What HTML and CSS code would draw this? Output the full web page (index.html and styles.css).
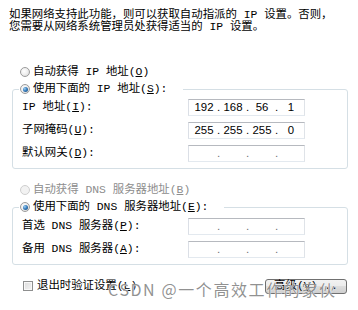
FILE: index.html
```html
<!DOCTYPE html>
<html>
<head>
<meta charset="utf-8">
<link rel="stylesheet" href="styles.css">
</head>
<body>
<div class="page">
  <p class="intro">如果网络支持此功能，则可以获取自动指派的 IP 设置。否则，<br>您需要从网络系统管理员处获得适当的 IP 设置。</p>

  <div class="option top"><span class="radio"></span><span>自动获得 IP 地址(<u>O</u>)</span></div>
  <fieldset class="group">
    <legend><span class="option"><span class="radio checked"></span><span>使用下面的 IP 地址(<u>S</u>):</span></span></legend>
    <div class="rows">
      <span class="label">IP 地址(<u>I</u>):</span>
      <div class="ip"><span>192</span><i>.</i><span>168</span><i>.</i><span>56</span><i>.</i><span>1</span></div>
      <span class="label">子网掩码(<u>U</u>):</span>
      <div class="ip"><span>255</span><i>.</i><span>255</span><i>.</i><span>255</span><i>.</i><span>0</span></div>
      <span class="label">默认网关(<u>D</u>):</span>
      <div class="ip empty"><span></span><i>.</i><span></span><i>.</i><span></span><i>.</i><span></span></div>
    </div>
  </fieldset>

  <div class="option top second disabled"><span class="radio"></span><span>自动获得 DNS 服务器地址(<u>B</u>)</span></div>
  <fieldset class="group dns">
    <legend><span class="option"><span class="radio checked"></span><span>使用下面的 DNS 服务器地址(<u>E</u>):</span></span></legend>
    <div class="rows">
      <span class="label">首选 DNS 服务器(<u>P</u>):</span>
      <div class="ip empty"><span></span><i>.</i><span></span><i>.</i><span></span><i>.</i><span></span></div>
      <span class="label">备用 DNS 服务器(<u>A</u>):</span>
      <div class="ip empty"><span></span><i>.</i><span></span><i>.</i><span></span><i>.</i><span></span></div>
    </div>
  </fieldset>

  <div class="footer">
    <span class="check"></span><span>退出时验证设置(<u>L</u>)</span>
    <button class="btn">高级(<u>V</u>)...</button>
  </div>

  <div class="watermark">CSDN @一个高效工作的家伙</div>
</div>
</body>
</html>
```

FILE: styles.css
```css
html, body {
  margin: 0;
  padding: 0;
  background: #fff;
}
body {
  font-family: "Liberation Mono", "Noto Sans CJK SC", sans-serif;
  font-size: 11.4px;
  color: #000;
}
.page {
  position: relative;
  width: 358px;
  height: 310px;
  box-sizing: border-box;
  padding: 9px 10px 0 9px;
  overflow: hidden;
}
.intro {
  margin: 0;
  line-height: 12px;
  white-space: nowrap;
}
u { text-decoration: underline; text-underline-offset: 1px; }

.option {
  display: flex;
  align-items: center;
  height: 16px;
  line-height: 16px;
  white-space: nowrap;
}
.option.top {
  margin: 31px 0 0 11px;
}
.option.top.second {
  margin-top: 13px;
}
.option.disabled {
  color: #8d8d8d;
}
.radio {
  position: relative;
  width: 10px;
  height: 10px;
  box-sizing: border-box;
  border-radius: 50%;
  border: 1px solid #9c9c9c;
  background: radial-gradient(circle at 40% 40%, #ffffff 0%, #f0f0f0 45%, #d4d4d4 100%);
  margin-right: 3px;
  flex: none;
}
.disabled .radio {
  border-color: #cfcfcf;
  background: #f2f2f2;
}
.radio.checked::after {
  content: "";
  position: absolute;
  left: 1.5px;
  top: 1.5px;
  width: 5px;
  height: 5px;
  border-radius: 50%;
  background: radial-gradient(circle at 35% 35%, #9fd0f2 0%, #3a7fbf 45%, #13416e 100%);
}

.group {
  margin: 1px 0 0 3px;
  min-width: 0;
  padding: 2px 0 6px 9px;
  border: 1px solid #d5dfe5;
  border-radius: 3px;
}
.group.dns {
  padding-top: 3px;
}
.group legend {
  margin-left: -3px;
  padding: 0 16px 0 1px;
  line-height: 16px;
  height: 16px;
}
.rows {
  display: grid;
  grid-template-columns: 166px 117px;
  grid-auto-rows: 17px;
  row-gap: 6px;
  align-items: center;
}
.label {
  line-height: 17px;
  white-space: nowrap;
}
.ip {
  display: flex;
  align-items: center;
  box-sizing: border-box;
  width: 117px;
  height: 17px;
  border: 1px solid;
  border-color: #b6b9bf #dfe3e8 #e3e9ef #dbdfe6;
  padding-left: 2px;
  font-family: "Liberation Sans", sans-serif;
  font-size: 11.4px;
  line-height: 15px;
}
.ip span {
  width: 26px;
  text-align: center;
}
.ip i {
  width: 3px;
  font-style: normal;
}
.ip.empty i {
  color: #707070;
}

.footer {
  display: flex;
  align-items: center;
  height: 16px;
  margin: 13px 0 0 14px;
  line-height: 16px;
  white-space: nowrap;
}
.check {
  width: 10px;
  height: 10px;
  box-sizing: border-box;
  border: 1px solid #8e8f8f;
  background: linear-gradient(135deg, #dcdcdc, #f4f4f4);
  margin-right: 4px;
  box-shadow: inset 0 0 0 1px #f8f8f8;
}
.btn {
  margin-left: auto;
  margin-right: 1px;
  width: 82px;
  height: 15px;
  padding: 0;
  border: 1px solid #707070;
  border-radius: 3px;
  background: linear-gradient(#f2f2f2 0%, #ebebeb 50%, #dddddd 50%, #cfcfcf 100%);
  font-family: "Liberation Mono", "Noto Sans CJK SC", sans-serif;
  font-size: 11.4px;
  line-height: 13px;
  color: #000;
}

.watermark {
  position: absolute;
  left: 108px;
  top: 279px;
  font-family: "Noto Sans CJK SC", sans-serif;
  font-size: 16px;
  line-height: 20px;
  letter-spacing: 1.6px;
  color: rgba(125, 125, 125, 0.85);
  text-shadow: 0 0 1px #fff, 0 0 1px #fff;
  white-space: nowrap;
}
```
